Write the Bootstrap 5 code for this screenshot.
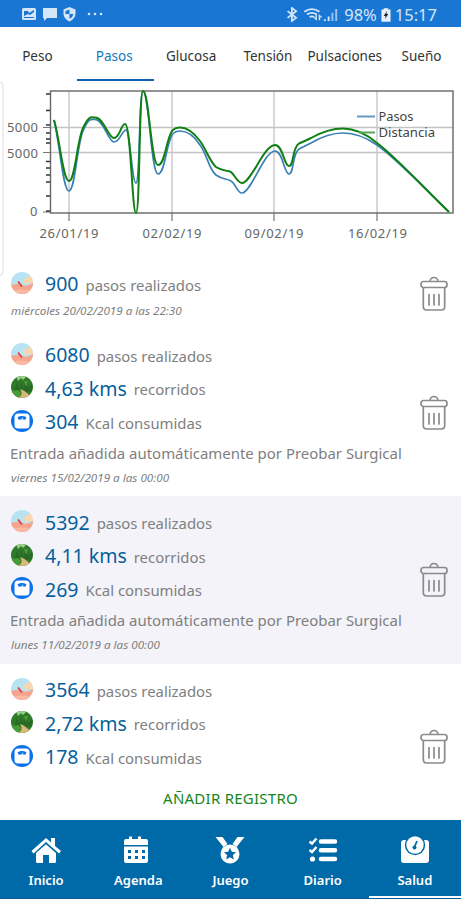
<!DOCTYPE html>
<html lang="es">
<head>
<meta charset="utf-8">
<meta name="viewport" content="width=device-width, initial-scale=1">
<title>Salud - Pasos</title>
<link href="https://cdn.jsdelivr.net/npm/bootstrap@5.3.0/dist/css/bootstrap.min.css" rel="stylesheet">
<style>
body{font-family:"Noto Sans","Open Sans",sans-serif;height:900px;overflow:hidden;background:#fff;color:#333}
svg{display:block;flex:none}
.status-bar{height:27px;background:#1976d2;color:#d3e6fa;font-size:16.5px;line-height:27px;padding:2px 24px 0 22px}
.tab-strip{height:54px}
.tab-strip .nav-link{color:#333;font-size:13.5px;line-height:20px;padding:19px 2px 0 0;height:54px;border-radius:0;white-space:nowrap;flex:1 1 0;width:0;display:flex;justify-content:center}
.tab-strip .nav-link.active{color:#1677b8;border-bottom:2px solid #0f63b0}
.chart-area{height:177px}
.axis-label{font-size:13px;fill:#666}
.key-label{font-size:11.7px;fill:#444}
.records{height:523px}
.record{height:167.4px;padding:8px 13px 0 11px;flex:none}
.record.short{height:71px}
.record.alt{background:#f3f3f9}
.metric{height:33.5px;color:#808080;font-size:14.9px;line-height:33px}
.metric b{font-weight:400;color:#07609c;font-size:19.5px;margin-left:12px;margin-right:7px;padding-top:2px}
.metric span{padding-top:5px}
.entry-note{font-size:14.95px;line-height:30px;height:30px;color:#808080;white-space:nowrap;margin-left:-1px}
.entry-date{font-size:11.65px;line-height:20px;font-style:italic;color:#808080;white-space:nowrap}
.short .entry-date{padding-top:1px}
.trash-btn{margin-top:-8px}
.add-btn{height:39px;color:#15861c;font-size:15px;letter-spacing:.25px;border-radius:0;line-height:35px}
.bottom-nav{height:79px;background:#0069a8;border-bottom:1px solid #0a5a94}
.bottom-nav a{color:#fff;font-weight:600;font-size:13px;line-height:18px;padding-top:14px;width:20%;border-bottom:2px solid transparent}
.bottom-nav a span{padding-top:5px}
.bottom-nav a.active{border-color:#fff}
</style>
</head>
<body>
<svg width="0" height="0" class="position-absolute">
<defs>
<symbol id="foot" viewBox="0 0 22 22"><clipPath id="disc"><circle cx="11" cy="11" r="11"/></clipPath><g clip-path="url(#disc)"><path fill="#b7e3f2" d="M0 0h22v22H0z"/><path fill="#f7d7b0" d="M12 8l10-7v10l-8 1z"/><path fill="#f6a58c" d="M0 13q6-2 11 0t11-2v11H0z"/><path fill="#fbb9a2" d="M0 19q11-3 22 0v3H0z"/><path stroke="#d8403c" stroke-width="1.800" d="M7 9.500l4 5"/></g></symbol>
<symbol id="path" viewBox="0 0 22 22"><g clip-path="url(#disc)"><path fill="#2f7a2b" d="M0 0h22v22H0z"/><path fill="#9bd08b" d="M5 0h11l-4 4-2-2-3 3z"/><path fill="#286b24" d="M1 7l3 9M6 6l2 8 2-9 2 8 3-9 2 8 4-4v7l-9 2H3z"/><path fill="#4c9a35" d="M0 15l7-1 3 2-2 6H0zM13 5l2 6 2-6z"/><path fill="#d9b779" d="M9 13q4 1 7 4t4 2l-5 3H7q6-3 2-9z"/></g></symbol>
<symbol id="scale" viewBox="0 0 22 22"><circle cx="11" cy="11" r="11" fill="#0b72ea"/><rect x="3.500" y="3.500" width="15" height="15" rx="3.500" fill="#fff"/><path fill="#0b72ea" d="M6.500 7.200q4.500-2.500 9 0l-1.200 2.600q-3.300-1.100-6.600 0z"/><path stroke="#fff" stroke-width=".8" d="M11 9l.8-1.300"/></symbol>
<symbol id="trash" viewBox="0 0 28 36"><g fill="none" stroke="#8b8b8b" stroke-width="1.700"><path d="M10 5.500q.5-4 4-4t4 4"/><rect x="1" y="5.500" width="26" height="6" rx="2.500"/><path d="M3.300 11.500v19q0 3.500 3.500 3.500h14.400q3.500 0 3.500-3.500v-19"/><path stroke-linecap="round" d="M9 18.500v10.500M14 18.500v10.500M19 18.500v10.500"/></g></symbol>
</defs></svg>
<div class="vh-100 d-flex flex-column overflow-hidden">
<header class="status-bar d-flex justify-content-between align-items-center">
<div class="d-flex align-items-center gap-2">
<svg width="83" height="16" viewBox="0 0 83 16" fill="#d3e6fa"><rect y="1" width="14" height="12" rx="1.500"/><path fill="#1976d2" d="M2 4h4l1 2 5-3v2L8 8 6 7 2 9zM2 10h10v1H2z"/><path d="M21 1h14v10H25l-3 3v-3h-1z"/><path d="M47.500 0l6 2.500v4q0 5-6 8-6-3-6-8v-4z"/><path fill="#1976d2" d="M47.500 2.500V7h-4V4zM47.500 7h4q-.5 3-4 5z"/><circle cx="67" cy="7" r="1.300"/><circle cx="73" cy="7" r="1.300"/><circle cx="79" cy="7" r="1.300"/></svg>
</div>
<div class="d-flex align-items-center">
<svg class="me-1" width="53" height="15" viewBox="1 0 49 16" preserveAspectRatio="none" fill="none" stroke="#d3e6fa"><path stroke-width="1.700" d="M1.500 4.500l8 7L5.500 15V1L9.500 4.500l-8 7"/><path stroke-width="2" d="M17 5q7-5.500 14 0M19.500 8q4.500-3.500 9 0M22 10.800q2-1.600 4 0"/><path stroke-width="1.300" d="M28 8v5l-2-2M31 14V9l2 2"/><path stroke-width="1.800" d="M36 15v-2M39.500 15v-5"/><path stroke-width="1.800" opacity=".7" d="M43 15V6M46.500 15V2"/></svg>
<span id="battery">98%</span>
<svg class="mx-1" width="10" height="14" viewBox="0 0 11 15"><path fill="#e5f0fc" d="M3 0h5v1.500h2.500V15h-10V1.500H3z"/><path fill="#222" d="M6.500 3L3 8.500h2L4.500 12 8 6.500H6z"/></svg>
<span id="clock">15:17</span>
</div>
</header>
<nav class="tab-strip nav flex-nowrap">
<a class="nav-link"><span>Peso</span></a><a class="nav-link active"><span>Pasos</span></a><a class="nav-link"><span>Glucosa</span></a><a class="nav-link"><span>Tensión</span></a><a class="nav-link"><span>Pulsaciones</span></a><a class="nav-link"><span>Sueño</span></a>
</nav>
<section class="chart-area">
<svg width="461" height="196" viewBox="0 81 461 196" class="overflow-visible">
<path fill="none" stroke="#ddd" d="M0 82q3 0 3 4v185q0 4-3 5"/>
<path stroke="#c4c4c4" stroke-width="1.300" d="M69 91v122M172 91v122M274 91v122M377 91v122M51 127.500h402M51 152.500h402"/>
<path stroke="#777" stroke-width="1.200" d="M69 213v8M172 213v8M274 213v8M377 213v8M43 127.500h8M43 152.500h8M43 212h8"/>
<path stroke="#333" stroke-width="1.500" d="M46 94h4M46 110.500h4M46 125h4M46 133h4M46 139h4M46 143h4M46 161.500h4M46 168h4M46 175h4M46 182h4M46 196h4M46 211h4"/>
<rect x="50.500" y="91" width="402.500" height="122" fill="none" stroke="#666" stroke-width="1.400"/>
<path fill="none" stroke="#397fb5" stroke-width="1.700" d="M54 120C60 145 63 191 69 191S77 145 83 131S91 119.500 95 119.500C104 119.500 108 142 114 142S122 130 126 130C130 130 132 183 136 183S139 91 143 91C149 91 151 174 158 174S166 145 172 135Q175 131 180 131Q191 131 200 145C207 154 209 170 216 175S226 178 231 181S237 193 242 193C251 193 264 151 275 151C283 151 284 174 289 174S292 154 299 149Q305 146 311 143Q328 133 343 133Q360 133 377 145C397 159 424 188 449 212"/>
<path fill="none" stroke="#108014" stroke-width="2" d="M54 120C60 140 63 181 69 181S77 141 83 128S91 117.500 95 117.500C104 117.500 108 138 114 138S121 124 125 124C131 124 132 213 136 213S139 91 143 91C149 91 151 165 158 165S166 140 172 131Q175 127.500 180 127.500C188 127.500 194 133 200 141S210 162 216 167Q221 170 230 171.500C234 173 237 183 242 183C251 183 264 145 275 145C283 145 284 166 289 166S292 148 299 143.500Q305 141 311 138Q328 128.500 343 128.500Q360 128.500 377 143C397 158 424 188 449 212"/>
<path stroke="#6798c3" stroke-width="2" d="M357 116.500h18"/><path stroke="#57a553" stroke-width="2" d="M359 132.500h16"/>
<g class="key-label"><text x="378.500" y="120.700" textLength="35" lengthAdjust="spacingAndGlyphs">Pasos</text><text x="378.500" y="137" textLength="56.500" lengthAdjust="spacingAndGlyphs">Distancia</text></g>
<g class="axis-label"><text x="7" y="132" textLength="31">5000</text><text x="7" y="157.500" textLength="31">5000</text><text x="30" y="216">0</text><text x="39.500" y="238" textLength="59">26/01/19</text><text x="142.500" y="238" textLength="59">02/02/19</text><text x="244.500" y="238" textLength="59">09/02/19</text><text x="348" y="238" textLength="59">16/02/19</text></g>
</svg>
</section>
<main class="records d-flex flex-column overflow-hidden">
<article class="record short d-flex justify-content-between align-items-center">
<div class="align-self-start">
<div class="metric d-flex align-items-center"><svg width="22" height="22"><use href="#foot"/></svg><b>900</b><span>pasos realizados</span></div>
<div class="entry-date"><span>miércoles 20/02/2019 a las 22:30</span></div>
</div><svg class="trash-btn" width="28" height="36"><use href="#trash"/></svg>
</article>
<article class="record d-flex justify-content-between align-items-center">
<div class="align-self-start">
<div class="metric d-flex align-items-center"><svg width="22" height="22"><use href="#foot"/></svg><b>6080</b><span>pasos realizados</span></div>
<div class="metric d-flex align-items-center"><svg width="22" height="22"><use href="#path"/></svg><b>4,63 kms</b><span>recorridos</span></div>
<div class="metric d-flex align-items-center"><svg width="22" height="22"><use href="#scale"/></svg><b>304</b><span>Kcal consumidas</span></div>
<div class="entry-note"><span>Entrada añadida automáticamente por Preobar Surgical</span></div>
<div class="entry-date"><span>viernes 15/02/2019 a las 00:00</span></div>
</div><svg class="trash-btn" width="28" height="36"><use href="#trash"/></svg>
</article>
<article class="record alt d-flex justify-content-between align-items-center">
<div class="align-self-start">
<div class="metric d-flex align-items-center"><svg width="22" height="22"><use href="#foot"/></svg><b>5392</b><span>pasos realizados</span></div>
<div class="metric d-flex align-items-center"><svg width="22" height="22"><use href="#path"/></svg><b>4,11 kms</b><span>recorridos</span></div>
<div class="metric d-flex align-items-center"><svg width="22" height="22"><use href="#scale"/></svg><b>269</b><span>Kcal consumidas</span></div>
<div class="entry-note"><span>Entrada añadida automáticamente por Preobar Surgical</span></div>
<div class="entry-date"><span>lunes 11/02/2019 a las 00:00</span></div>
</div><svg class="trash-btn" width="28" height="36"><use href="#trash"/></svg>
</article>
<article class="record d-flex justify-content-between align-items-center">
<div class="align-self-start">
<div class="metric d-flex align-items-center"><svg width="22" height="22"><use href="#foot"/></svg><b>3564</b><span>pasos realizados</span></div>
<div class="metric d-flex align-items-center"><svg width="22" height="22"><use href="#path"/></svg><b>2,72 kms</b><span>recorridos</span></div>
<div class="metric d-flex align-items-center"><svg width="22" height="22"><use href="#scale"/></svg><b>178</b><span>Kcal consumidas</span></div>
</div><svg class="trash-btn" width="28" height="36"><use href="#trash"/></svg>
</article>
</main>
<button class="add-btn btn p-0 border-0 w-100 d-flex justify-content-center"><span>AÑADIR REGISTRO</span></button>
<nav class="bottom-nav d-flex">
<a class="text-decoration-none d-flex flex-column align-items-center"><svg width="32" height="32" viewBox="0 0 32 32" fill="#fff"><path d="M1.500 17L16 4l5 4.500V4h4v8l6 5-2 2.500L16 8 3.500 19.500z"/><path d="M6 19L16 10.200 26 19v8.500q0 1.500-1.500 1.500H19v-8h-6v8H7.500Q6 29 6 27.500z"/></svg><span>Inicio</span></a>
<a class="text-decoration-none d-flex flex-column align-items-center"><svg class="me-1" width="32" height="32" viewBox="0 0 32 32"><path fill="#fff" d="M4 11V7q0-2 2-2h3V2.500h3V5h6V2.500h3V5h5q2 0 2 2v4zM4 12.500h24V27q0 2-2 2H6q-2 0-2-2z"/><path stroke="#0069a8" stroke-width="3" stroke-dasharray="3 4" d="M8 17.500h17M8 23.500h17"/></svg><span>Agenda</span></a>
<a class="text-decoration-none d-flex flex-column align-items-center"><svg width="32" height="32" viewBox="0 0 32 32"><path fill="#fff" d="M1.500 3h7l5 7-4 3zM30.500 3h-7l-5 7 4 3z"/><circle cx="16" cy="20" r="9.500" fill="#fff"/><path fill="#0069a8" d="M16 13.800l1.800 4 4.300.4-3.200 2.900.9 4.300L16 23.200l-3.800 2.200.9-4.300-3.200-2.900 4.300-.4z"/></svg><span>Juego</span></a>
<a class="text-decoration-none d-flex flex-column align-items-center"><svg width="32" height="32" viewBox="0 0 32 32"><path fill="none" stroke="#fff" stroke-width="2.500" d="M2.500 7.500l2.500 2L9.500 4.500M2.500 16l2.500 2 4.500-5"/><circle cx="5.500" cy="25" r="2.600" fill="#fff"/><path stroke="#fff" stroke-width="4.500" stroke-linecap="round" d="M14 7.500h14M14 16.200h14M14 25h14"/></svg><span>Diario</span></a>
<a class="active text-decoration-none d-flex flex-column align-items-center"><svg width="32" height="32" viewBox="0 0 32 32"><path fill="#fff" d="M5 6h22q3 0 3 3v17q0 3-3 3H5q-3 0-3-3V9q0-3 3-3z"/><circle cx="16" cy="11" r="10.200" fill="#0069a8"/><circle cx="16" cy="11" r="8.700" fill="#fff"/><path stroke="#0069a8" stroke-width="1.800" d="M15.500 13l2.500-6"/><circle cx="15.500" cy="13.500" r="2" fill="#0069a8"/></svg><span>Salud</span></a>
</nav>
</div>
<script src="https://cdn.jsdelivr.net/npm/bootstrap@5.3.0/dist/js/bootstrap.bundle.min.js"></script>
</body>
</html>
